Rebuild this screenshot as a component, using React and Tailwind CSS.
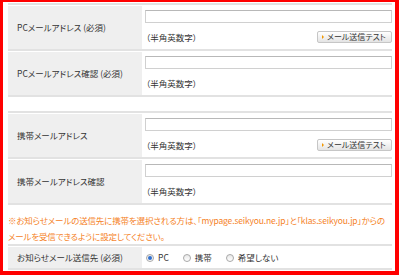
const font = "font-['Noto_Sans_CJK_JP','Noto_Sans',sans-serif] [font-feature-settings:'palt']";

const pcRows = [
  { label: "PCメールアドレス (必須)", test: true },
  { label: "PCメールアドレス確認 (必須)" }
];

const mobileRows = [
  { label: "携帯メールアドレス", test: true },
  { label: "携帯メールアドレス確認" }
];

const TestButton = () => (
  <button className="flex items-center h-[12px] w-[75px] pl-[4px] gap-[3px] rounded-[2px] border border-[#c6c6c6] bg-gradient-to-b from-white to-[#e4e4e4] text-[8px] leading-none text-[#333]">
    <span className="w-0 h-0 border-y-[2px] border-y-transparent border-l-[2px] border-l-[#f39800]" />
    <span>メール送信テスト</span>
  </button>
);

const MailRow = ({ label, test }) => (
  <div className="flex pt-px border-b-2 border-[#e2e2e2]">
    <div className="w-[134px] h-[43px] bg-[#efefef] flex items-center pl-[9px] text-[#333]">{label}</div>
    <div className="flex-1 pl-[3px] pt-[4px]">
      <div className="h-[13px] border border-[#d0d0d0] border-t-[#b8b8b8] bg-white" />
      <div className="flex items-center justify-between h-[12px] mt-[8px] pl-[1px]">
        <span className="text-[#333]">（半角英数字）</span>
        {test ? <TestButton /> : null}
      </div>
    </div>
  </div>
);

const Radio = ({ checked, label }) => (
  <label className="flex items-center gap-[4px]">
    <span className="w-[8px] h-[8px] rounded-full border border-[#a8a8a8] bg-gradient-to-b from-[#e8e8e8] to-white flex items-center justify-center">
      {checked ? <span className="w-[4px] h-[4px] rounded-full bg-[#2f6fcf]" /> : null}
    </span>
    <span className="text-[#333]">{label}</span>
  </label>
);

export default function App() {
  return (
    <div className={`w-[400px] h-[275px] bg-white text-[8.5px] ${font}`}>
      <div className="w-[399px] h-[275px] box-border border-[#ff0000] border-l-[3px] border-t-2 border-r-4 border-b-4 pl-[5px] pr-[3px] pt-px">
        <div className="border-t-2 border-[#e2e2e2]">
          {pcRows.map((r) => (
            <MailRow key={r.label} {...r} />
          ))}
        </div>

        <div className="border-t-2 border-[#e2e2e2] mt-[14px]">
          {mobileRows.map((r) => (
            <MailRow key={r.label} {...r} />
          ))}
        </div>

        <p className="pt-[7px] leading-[16px] text-[#f5821f] whitespace-nowrap tracking-[-0.15px]">
          ※お知らせメールの送信先に携帯を選択される方は、「mypage.seikyou.ne.jp」と「klas.seikyou.jp」からの
          <br />
          メールを受信できるように設定してください。
        </p>

        <div className="border-t-2 border-[#e2e2e2]">
          <div className="flex pt-px border-b-2 border-[#e2e2e2]">
            <div className="w-[134px] h-[21px] bg-[#efefef] flex items-center pl-[9px] text-[#333]">お知らせメール送信先 (必須)</div>
            <div className="flex-1 flex items-center pl-[4px] gap-[14px]">
              <Radio checked label="PC" />
              <Radio label="携帯" />
              <Radio label="希望しない" />
            </div>
          </div>
        </div>
      </div>
    </div>
  );
}
